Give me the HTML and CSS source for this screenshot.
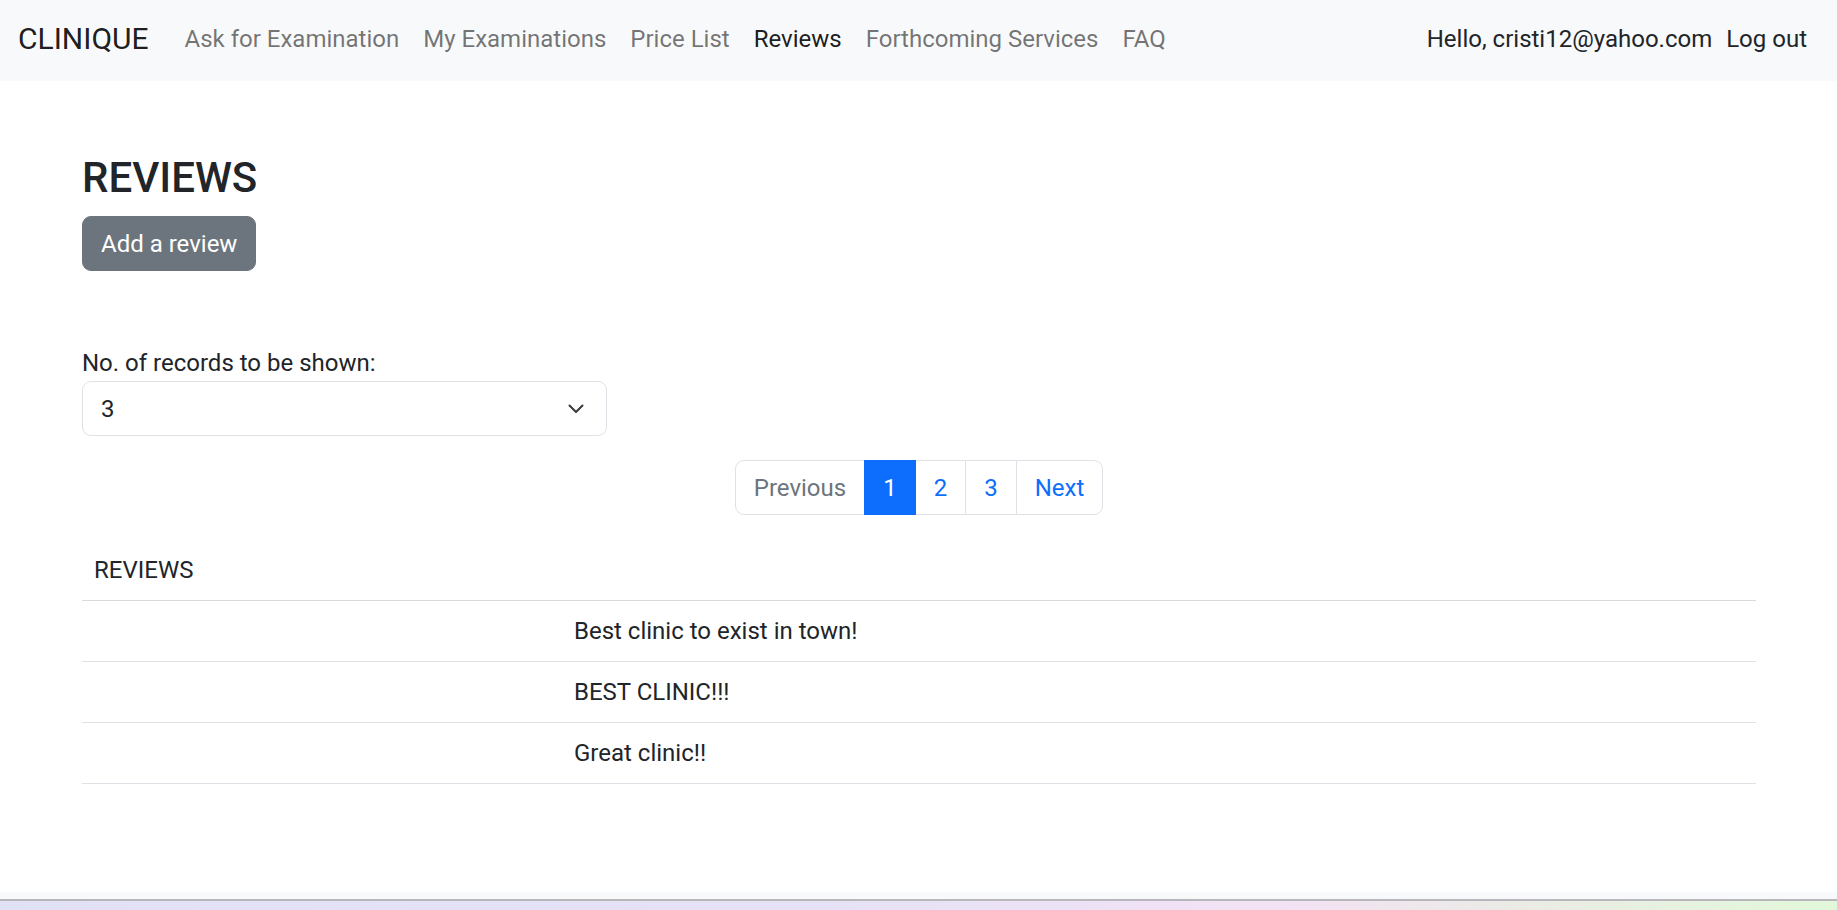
FILE: index.html
```html
<!DOCTYPE html>
<html lang="en">
<head>
<meta charset="utf-8">
<title>Reviews - CLINIQUE</title>
<link rel="stylesheet" href="styles.css">
</head>
<body>
<div class="page">
  <nav class="navbar">
    <a class="brand" href="#">CLINIQUE</a>
    <ul class="nav-links">
      <li><a class="nav-link" href="#">Ask for Examination</a></li>
      <li><a class="nav-link" href="#">My Examinations</a></li>
      <li><a class="nav-link" href="#">Price List</a></li>
      <li><a class="nav-link active" href="#">Reviews</a></li>
      <li><a class="nav-link" href="#">Forthcoming Services</a></li>
      <li><a class="nav-link" href="#">FAQ</a></li>
    </ul>
    <div class="nav-user">
      <span class="user-hello">Hello, cristi12@yahoo.com</span>
      <a class="user-logout" href="#">Log out</a>
    </div>
  </nav>

  <main class="content">
    <h3 class="page-title">REVIEWS</h3>
    <button class="btn-secondary" type="button">Add a review</button>

    <div class="records">
      <label class="records-label">No. of records to be shown:</label>
      <div class="select-box">
        <span class="select-value">3</span>
        <svg class="select-chevron" width="16" height="10" viewBox="0 0 16 10" aria-hidden="true">
          <polyline points="1.5,1.5 8,8 14.5,1.5" fill="none" stroke="#343a40" stroke-width="2" stroke-linecap="round" stroke-linejoin="round"/>
        </svg>
      </div>
    </div>

    <div class="pager-wrap">
      <ul class="pagination">
        <li class="page-item disabled"><span class="page-link">Previous</span></li>
        <li class="page-item active"><span class="page-link">1</span></li>
        <li class="page-item"><a class="page-link" href="#">2</a></li>
        <li class="page-item"><a class="page-link" href="#">3</a></li>
        <li class="page-item"><a class="page-link" href="#">Next</a></li>
      </ul>
    </div>

    <table class="reviews-table">
      <colgroup>
        <col class="col-first">
        <col>
      </colgroup>
      <thead>
        <tr><th>REVIEWS</th><th></th></tr>
      </thead>
      <tbody>
        <tr><td></td><td>Best clinic to exist in town!</td></tr>
        <tr><td></td><td>BEST CLINIC!!!</td></tr>
        <tr><td></td><td>Great clinic!!</td></tr>
      </tbody>
    </table>
  </main>

  <div class="bottom-band"></div>
  <div class="bottom-line"></div>
  <div class="bottom-gradient"></div>
</div>
</body>
</html>
```

FILE: styles.css
```css
* {
  box-sizing: border-box;
}

html, body {
  margin: 0;
  padding: 0;
}

body {
  font-family: Roboto, "Liberation Sans", sans-serif;
  font-size: 24px;
  line-height: 1.5;
  color: #212529;
  background: #ffffff;
}

.page {
  min-height: 100vh;
  display: flex;
  flex-direction: column;
}

a {
  text-decoration: none;
}

/* Navbar */
.navbar {
  height: 81px;
  background: #f8f9fa;
  display: flex;
  align-items: center;
  padding: 0 30px 4px 18px;
  flex-shrink: 0;
}

.brand {
  font-size: 30px;
  color: rgba(0, 0, 0, 0.9);
  margin-right: 24px;
  line-height: 1.5;
}

.nav-links {
  list-style: none;
  display: flex;
  margin: 0;
  padding: 0;
}

.nav-link {
  display: block;
  padding: 0 12px;
  color: rgba(0, 0, 0, 0.55);
}

.nav-link.active {
  color: rgba(0, 0, 0, 0.9);
}

.nav-user {
  margin-left: auto;
  display: flex;
  gap: 14px;
  color: #212529;
}

.user-logout {
  color: #212529;
}

/* Content */
.content {
  flex: 1;
  padding: 72px 81px 0 82px;
}

.page-title {
  font-size: 42px;
  font-weight: 500;
  line-height: 1.2;
  margin: 0 0 13px 0;
}

.btn-secondary {
  font-family: inherit;
  font-size: 24px;
  line-height: 36px;
  color: #ffffff;
  background: #6c757d;
  border: 1px solid #6c757d;
  border-radius: 9px;
  padding: 8.5px 18px;
  cursor: pointer;
}

.records {
  margin-top: 74px;
}

.records-label {
  display: block;
  margin-bottom: 0;
}

.select-box {
  width: 525px;
  height: 55px;
  border: 1px solid #dee2e6;
  border-radius: 9px;
  display: flex;
  align-items: center;
  justify-content: space-between;
  padding: 0 22px 0 18px;
  background: #ffffff;
}

.select-chevron {
  display: block;
}

/* Pagination */
.pager-wrap {
  display: flex;
  justify-content: center;
  margin-top: 24px;
}

.pagination {
  list-style: none;
  display: flex;
  margin: 0;
  padding: 0;
}

.page-link {
  display: block;
  padding: 8.5px 18px;
  line-height: 36px;
  border: 1px solid #dee2e6;
  color: #0d6efd;
  background: #ffffff;
  margin-left: -1px;
}

.page-item:first-child .page-link {
  margin-left: 0;
  border-radius: 9px 0 0 9px;
}

.page-item:last-child .page-link {
  border-radius: 0 9px 9px 0;
}

.page-item.disabled .page-link {
  color: #6c757d;
}

.page-item.active .page-link {
  background: #0d6efd;
  border-color: #0d6efd;
  color: #ffffff;
  position: relative;
}

/* Table */
.reviews-table {
  width: 100%;
  margin-top: 24px;
  border-collapse: collapse;
  table-layout: fixed;
}

.col-first {
  width: 480px;
}

.reviews-table th,
.reviews-table td {
  text-align: left;
  font-weight: 400;
  padding: 12px 12px;
  line-height: 36px;
  height: 61px;
  border-bottom: 1px solid #dee2e6;
  vertical-align: middle;
}

.reviews-table thead th {
  border-bottom-color: #d9dadd;
}

/* bottom strips */
.bottom-band {
  height: 7px;
  background: #f8f9fa;
  flex-shrink: 0;
}

.bottom-line {
  height: 2px;
  background: #b8b8bc;
  flex-shrink: 0;
}

.bottom-gradient {
  height: 9px;
  background: linear-gradient(to right, #e1e1f6 0%, #e6e2f6 45%, #f3e2f4 70%, #ebebe6 82%, #e2f8da 100%);
  flex-shrink: 0;
}
```
